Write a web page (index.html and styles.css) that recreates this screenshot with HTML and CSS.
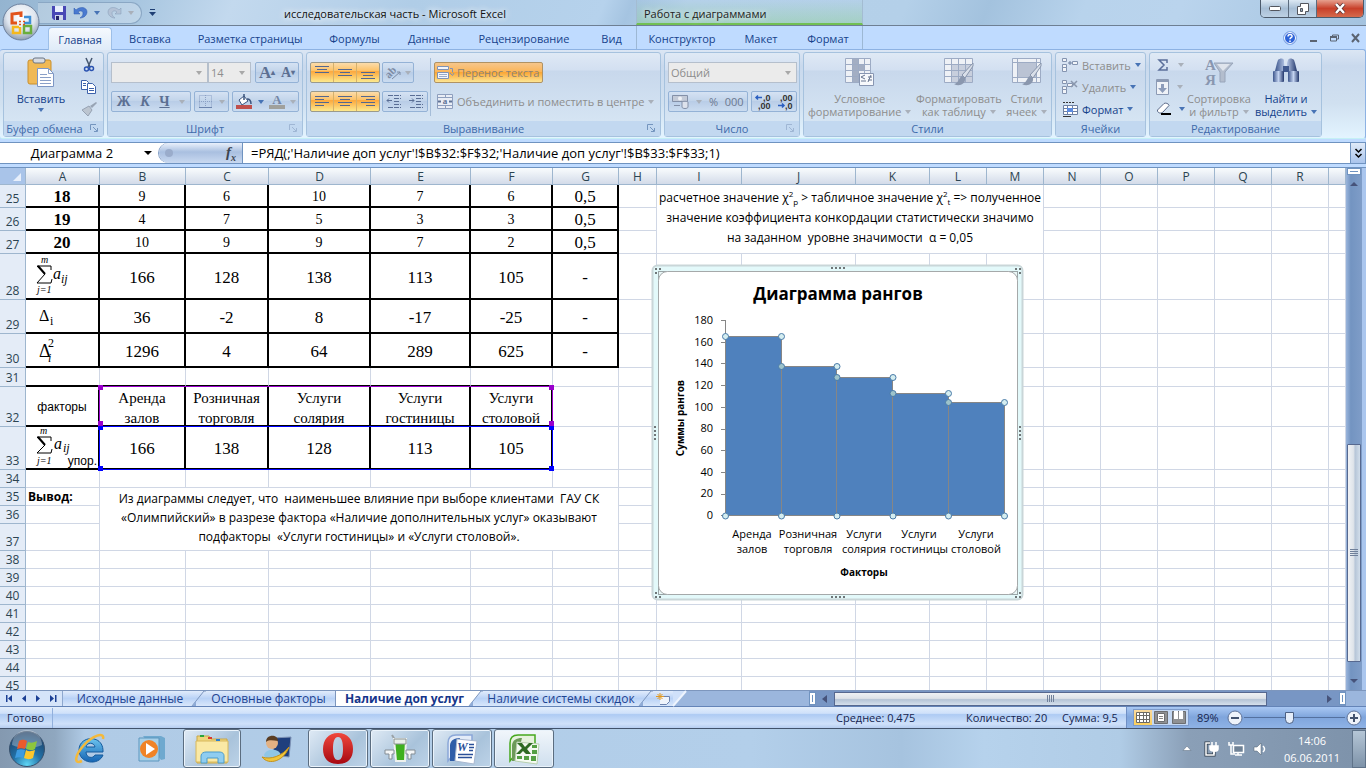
FILE: index.html
```html
<!DOCTYPE html>
<html lang="ru">
<head>
  <meta charset="UTF-8" />
  <meta name="viewport" content="width=device-width, initial-scale=1.0" />
  <title>исследовательская часть - Microsoft Excel</title>
  <link rel="stylesheet" href="styles.css">
</head>
<body>
  <!-- Title bar -->
  <header class="titlebar">
    <div class="quick">
      <button class="qbtn" aria-label="Сохранить"><svg width="14" height="14" viewBox="0 0 14 14"><path d="M0 0h14v14H2L0 12z" fill="#4747b5"/><rect x="3" y="0" width="8" height="6" fill="#e8eefc"/><path d="M3 9h8v5H3z" fill="#cfd6ea"/><path d="M4 10h3v4H4z" fill="#23236a"/></svg></button>
      <button class="qbtn" aria-label="Отменить"><svg width="14" height="14" viewBox="0 0 14 14"><path d="M0 2v6h6L4 6c2-2 5-1 5 1s-1 4-3 5c4 0 7-3 7-6 0-5-7-6-11-2z" fill="#4a7ad0" stroke="#2d58ad" stroke-width=".5"/></svg></button>
      <i class="arr blue"></i>
      <button class="qbtn" aria-label="Вернуть"><svg width="14" height="14" viewBox="0 0 14 14"><path d="M13 2v6H7l2-2C7 4 4 5 4 7s1 4 3 5c-4 0-7-3-7-6 0-5 7-6 11-2z" fill="#b3c2d6" stroke="#8298b5" stroke-width=".5"/></svg></button>
      <i class="arr grey"></i>
    </div>
    <button class="qmore" aria-label="Настройка панели"><svg width="7" height="7" viewBox="0 0 7 7"><path d="M1 .5h5" stroke="#1f3f74"/><path d="M0 3h7L3.500 7z" fill="#1f3f74"/></svg></button>
    <h1 class="doc-title">исследовательская часть - Microsoft Excel</h1>
    <div class="context-title">Работа с диаграммами</div>
    <div class="win-btns">
      <button aria-label="Свернуть"><svg width="12" height="5" viewBox="0 0 12 5"><rect x=".5" y=".5" width="11" height="4" rx="1" fill="#fff" stroke="#53565e"/></svg></button>
      <button aria-label="Восстановить"><svg width="12" height="12" viewBox="0 0 12 12"><path d="M3.500.5h8v8h-3v3h-8v-8h3z" fill="#fff" stroke="#53565e"/><path d="M3.500 5.500h2v3h-2z" fill="#8fa6bd" stroke="#53565e"/></svg></button>
      <button class="close" aria-label="Закрыть"><svg width="12" height="11" viewBox="0 0 12 11"><path d="M2 1l8 9M10 1L2 10" stroke="#5a3030" stroke-width="4"/><path d="M2 1l8 9M10 1L2 10" stroke="#fff" stroke-width="2.500"/></svg></button>
    </div>
  </header>

  <button class="office" aria-label="Office">
    <svg width="38" height="38" viewBox="0 0 38 38">
      <defs><radialGradient id="orb" cx=".5" cy=".35" r=".65"><stop offset="0" stop-color="#fff"/><stop offset=".6" stop-color="#dfe6ef"/><stop offset="1" stop-color="#8e9db2"/></radialGradient></defs>
      <circle cx="19" cy="19" r="18" fill="url(#orb)" stroke="#6d819e"/>
      <g fill="none" stroke-width="2.500">
        <path d="M19 14v-4l-9 1v9h5" stroke="#e2531b" stroke-width="3"/>
        <path d="M22 14h6v6h-6" stroke="#3d8fd6"/>
        <path d="M17 24h-6v6h7v-6" stroke="#f5b81d"/>
        <path d="M22 23h7v7h-7z" stroke="#6aae3c"/>
      </g>
      <path d="M17 18.500h2M21 18.500h2M17 21.500h2M21 21.500h2" stroke="#e2531b" stroke-width="1.500"/>
    </svg>
  </button>

  <!-- Ribbon tabs -->
  <nav class="tabs">
    <button class="tab active">Главная</button>
    <button class="tab t2">Вставка</button>
    <button class="tab t3">Разметка страницы</button>
    <button class="tab t4">Формулы</button>
    <button class="tab t5">Данные</button>
    <button class="tab t6">Рецензирование</button>
    <button class="tab t7">Вид</button>
    <div class="context-tabs">
      <button class="tab t8">Конструктор</button>
      <button class="tab t9">Макет</button>
      <button class="tab t10">Формат</button>
    </div>
    <div class="mdi">
      <svg width="14" height="14" viewBox="0 0 14 14"><circle cx="7" cy="7" r="6.500" fill="#2d63d8" stroke="#8cb0e8"/><circle cx="7" cy="7" r="5.500" fill="none" stroke="#fff"/><path d="M5 5.500c0-3 4.500-2.500 4 0-.3 1.200-2 1.300-2 2.800M7 9.500V11" stroke="#fff" stroke-width="1.500" fill="none"/></svg>
      <svg width="9" height="9" viewBox="0 0 9 9"><path d="M1 8h7" stroke="#5b6472" stroke-width="2"/></svg>
      <svg width="9" height="8" viewBox="0 0 9 8"><path d="M2.500 2V1h6v4H7M.5 3h6v4h-6z" fill="none" stroke="#5b6472"/><path d="M0 3h7" stroke="#5b6472" stroke-width="2"/></svg>
      <svg width="9" height="8" viewBox="0 0 9 8"><path d="M1 0l7 8M8 0L1 8" stroke="#5b6472" stroke-width="2"/></svg>
    </div>
  </nav>

  <!-- Ribbon -->
  <section class="ribbon">
    <div class="group g-clip">
      <div class="body">
        <button class="big">
          <svg width="28" height="30" viewBox="0 0 28 30"><rect x="1" y="3" width="23" height="24" rx="2" fill="#f0b955" stroke="#c98f2c"/><rect x="6" y="1" width="12" height="5" rx="2" fill="#d7dbe2" stroke="#6b7482"/><path d="M10.500 11.500h11l5 5v13h-16z" fill="#fff" stroke="#7d96c4"/><path d="M21.500 11.500v5h5M13 17.500h7M13 20.500h11M13 23.500h11M13 26.500h11" stroke="#8aa0c8" fill="none"/></svg>
          <span>Вставить</span><i class="arr blue"></i>
        </button>
        <div class="stack">
          <svg width="12" height="14" viewBox="0 0 12 14"><path d="M3 0l4 9M9 0L5 9" stroke="#44566f" stroke-width="1.500"/><g fill="none" stroke="#2a52b0" stroke-width="1.500"><circle cx="3.500" cy="11" r="2"/><circle cx="8.500" cy="10.500" r="2"/></g></svg>
          <svg width="15" height="14" viewBox="0 0 15 14"><g fill="#fff" stroke="#3d62ab"><path d="M.5.500h5l2 2v7h-7z"/><path d="M6.500 3.500h5l3 3v7h-8z"/></g><path d="M2 3.500h3M2 5.500h3M8 8.500h5M8 10.500h5" stroke="#3d62ab"/></svg>
          <svg width="16" height="14" viewBox="0 0 16 14"><path d="M15 0l-6 4 2 2 5-5z" fill="#98a4b4"/><path d="M8 4L1 8l6 6 4-6z" fill="#bcc5d0" stroke="#96a2b3"/></svg>
        </div>
      </div>
      <div class="caption">Буфер обмена<svg class="dlg" width="8" height="8" viewBox="0 0 8 8"><path d="M.5 6V.5H6M3 3l4 4M7.500 4v3.500H4" fill="none" stroke="#7495be"/></svg></div>
    </div>

    <div class="group g-font">
      <div class="body rows">
        <div class="row">
          <label class="combo c-font"><input type="text" aria-label="Шрифт"></label><label class="combo c-size"><select aria-label="Размер"><option>14</option></select></label>
          <div class="box b-grow"><button class="serif large">A<sup>▴</sup></button><button class="serif">A<sup>▾</sup></button></div>
        </div>
        <div class="row">
          <div class="box b-biu"><button class="serif">Ж</button><button class="serif it">К</button><button class="serif un">Ч</button><i class="arr grey"></i></div>
          <div class="box b-bord"><svg width="13" height="13" viewBox="0 0 13 13"><path d="M.5.500h12v12H.5zM6.500 0v13M0 6.500h13" fill="none" stroke="#8ba0c4" stroke-dasharray="1 1"/><path d="M0 12.500h13" stroke="#6b83ad"/></svg><i class="arr grey"></i></div>
          <div class="box b-fill"><svg width="17" height="15" viewBox="0 0 17 15"><path d="M3 6l5-4 4 5-6 4z" fill="#fff" stroke="#3c557f"/><path d="M8 6V0M11 5c4 0 4 3 4 5" stroke="#3c557f" fill="none" stroke-width="1.500"/><path d="M0 11h16v4H0z" fill="#c0504d"/></svg><i class="arr blue"></i><svg width="16" height="15" viewBox="0 0 16 15"><text x="8" y="10" text-anchor="middle" class="ico-a">A</text><path d="M0 11h16v4H0z" fill="#a0a09c"/></svg><i class="arr grey"></i></div>
        </div>
      </div>
      <div class="caption">Шрифт<svg class="dlg" width="8" height="8" viewBox="0 0 8 8"><path d="M.5 6V.5H6M3 3l4 4M7.500 4v3.500H4" fill="none" stroke="#9fb6d4"/></svg></div>
    </div>

    <div class="group g-align">
      <div class="body rows">
        <div class="row">
          <div class="box hot b-three">
            <svg width="22" height="19" viewBox="0 0 22 19"><path d="M4 3.500h14M6 6.500h10M4 9.500h14" stroke="#54678f"/></svg>
            <svg width="22" height="19" viewBox="0 0 22 19"><path d="M4 6.500h14M6 9.500h10M4 12.500h14" stroke="#54678f"/></svg>
            <svg width="22" height="19" viewBox="0 0 22 19"><path d="M4 9.500h14M6 12.500h10M4 15.500h14" stroke="#54678f"/></svg>
          </div>
          <div class="box b-orient"><svg width="17" height="15" viewBox="0 0 17 15"><text x="1" y="11" transform="rotate(-45 6 9)" class="ico-ab">ab</text><path d="M7 14l8-7m-3 0h3v3" stroke="#7d8ca6" fill="none"/></svg><i class="arr grey"></i></div>
          <span class="sep"></span>
          <button class="wrap-btn"><svg width="17" height="15" viewBox="0 0 17 15"><path d="M.5 1.500h11v3H.5zM.5 7.500h11v6H.5z" fill="#f4f6fb" stroke="#7f92b6"/><path d="M13 3.500h2.500v4M13 8l2.500 2.500L17 8" stroke="#7f92b6" fill="none"/><path d="M2 9.500h8M2 11.500h8" stroke="#9cabc8"/></svg>Перенос текста</button>
        </div>
        <div class="row">
          <div class="box hot b-three">
            <svg width="22" height="19" viewBox="0 0 22 19"><path d="M4 4.500h14M4 7.500h9M4 10.500h14M4 13.500h9" stroke="#54678f"/></svg>
            <svg width="22" height="19" viewBox="0 0 22 19"><path d="M4 4.500h14M6 7.500h10M4 10.500h14M6 13.500h10" stroke="#54678f"/></svg>
            <svg width="22" height="19" viewBox="0 0 22 19"><path d="M4 4.500h14M9 7.500h9M4 10.500h14M9 13.500h9" stroke="#54678f"/></svg>
          </div>
          <div class="box b-indent">
            <svg width="22" height="19" viewBox="0 0 22 19"><path d="M5 3.500h13M11 6.500h7M11 9.500h5M11 12.500h7M5 15.500h13" stroke="#5a6e95" stroke-dasharray="5 1"/><path d="M9 8.500H4m2-2l-2 2 2 2" stroke="#5a6e95" fill="none"/></svg>
            <svg width="22" height="19" viewBox="0 0 22 19"><path d="M5 3.500h13M11 6.500h7M11 9.500h5M11 12.500h7M5 15.500h13" stroke="#5a6e95" stroke-dasharray="5 1"/><path d="M4 8.500h5m-2-2l2 2-2 2" stroke="#5a6e95" fill="none"/></svg>
          </div>
          <span class="sep"></span>
          <button class="merge-btn"><svg width="16" height="15" viewBox="0 0 16 15"><path d="M.5.500h15v14H.5zM0 3.500h16M0 11.500h16M8.500 0v3M8.500 12v3" fill="#e9edf5" stroke="#8e9fbe"/><path d="M1 7.500h3M12 7.500h3" stroke="#5f7396" stroke-width="2"/><text x="8" y="10" text-anchor="middle" class="ico-s">a</text></svg>Объединить и поместить в центре<i class="arr grey"></i></button>
        </div>
      </div>
      <div class="caption">Выравнивание<svg class="dlg" width="8" height="8" viewBox="0 0 8 8"><path d="M.5 6V.5H6M3 3l4 4M7.500 4v3.500H4" fill="none" stroke="#7495be"/></svg></div>
    </div>

    <div class="group g-num">
      <div class="body rows">
        <div class="row"><label class="combo c-num"><select aria-label="Числовой формат"><option>Общий</option></select></label></div>
        <div class="row">
          <div class="box b-pct"><svg width="17" height="15" viewBox="0 0 17 15"><path d="M.5 1.500h15v6H.5z" fill="#c3cad7" stroke="#8390a8"/><circle cx="8" cy="4.500" r="2" fill="#eef1f6"/><path d="M10 8c0-1 6-1 6 0v5c0 2-6 2-6 0zM2 11.500h6" fill="#dde2ec" stroke="#8390a8"/></svg><i class="arr grey"></i><button>%</button><button>000</button></div>
          <div class="box b-dec"><svg width="21" height="17" viewBox="0 0 21 17"><path d="M9 4.500H3m2-2l-2 2 2 2" stroke="#2b5fc0" fill="none" stroke-width="1.500"/><text x="10" y="8" class="ico-d">,0</text><text x="5" y="16" class="ico-d">,00</text></svg><svg width="21" height="17" viewBox="0 0 21 17"><path d="M3 12.500h6M7 10.500l2 2-2 2" stroke="#2b5fc0" fill="none" stroke-width="1.500"/><text x="5" y="8" class="ico-d">,00</text><text x="10" y="16" class="ico-d">,0</text></svg></div>
        </div>
      </div>
      <div class="caption">Число<svg class="dlg" width="8" height="8" viewBox="0 0 8 8"><path d="M.5 6V.5H6M3 3l4 4M7.500 4v3.500H4" fill="none" stroke="#9fb6d4"/></svg></div>
    </div>

    <div class="group g-style">
      <div class="body">
        <button class="big off">
          <svg width="30" height="30" viewBox="0 0 30 30"><path d="M.5 1.500h25v24H.5z" fill="#eef1f6"/><path d="M7 2h6v24H7zM13 8h7v6h-7z" fill="#a3aec3"/><path d="M.5 1.500h25v24H.5zM0 7.500h26M0 13.500h26M0 19.500h26M7.500 1v25M13.500 1v25M19.500 1v25" fill="none" stroke="#9dabc4"/><path d="M14.500 16.500h14v12h-14z" fill="#f7f9fc" stroke="#8896b2"/><path d="M20 18l-4 2 4 2M16 24h5M23 20h4M23 23h4M26 18l-3 7" stroke="#66748f" fill="none"/></svg>
          <span>Условное</span><span>форматирование<i class="arr grey"></i></span>
        </button>
        <button class="big off">
          <svg width="30" height="30" viewBox="0 0 30 30"><path d="M.5 1.500h28v24H.5z" fill="#eef1f6"/><path d="M8 8h20v17H8z" fill="#c8cfdd"/><path d="M.5 1.500h28v24H.5zM0 7.500h29M0 13.500h29M0 19.500h29M7.500 1v25M14.500 1v25M21.500 1v25" fill="none" stroke="#9dabc4"/><path d="M29 6L18 18l3 3 8-12z" fill="#d9dfe9" stroke="#8794ab"/><path d="M18 19c-3 1-3 7-8 8 5 3 12 0 11-6z" fill="#8a97ae"/></svg>
          <span>Форматировать</span><span>как таблицу<i class="arr grey"></i></span>
        </button>
        <button class="big off">
          <svg width="30" height="30" viewBox="0 0 30 30"><path d="M.5 1.500h28v24H.5z" fill="#eef1f6"/><path d="M5 6h19v14H5z" fill="#bac3d4"/><path d="M.5 1.500h28v24H.5zM0 5.500h29M0 20.500h29M5.500 1v25M24.500 1v25" fill="none" stroke="#9dabc4"/><path d="M29 6L18 18l3 3 8-12z" fill="#d9dfe9" stroke="#8794ab"/><path d="M18 19c-3 1-3 7-8 8 5 3 12 0 11-6z" fill="#8a97ae"/></svg>
          <span>Стили</span><span>ячеек<i class="arr grey"></i></span>
        </button>
      </div>
      <div class="caption">Стили</div>
    </div>

    <div class="group g-cells">
      <div class="body list">
        <button class="off"><svg width="16" height="14" viewBox="0 0 16 14"><path d="M.5.500h4v3h-4zM.5 6.500h4v3h-4zM.5 9.500h4v4h-4zM10.500 3.500h5v3h-5z" fill="#f2f4f8" stroke="#8494b0"/><path d="M6 5h4M8 3v4" stroke="#6c7f9f"/></svg>Вставить<i class="arr blue"></i></button>
        <button class="off"><svg width="16" height="14" viewBox="0 0 16 14"><path d="M.5.500h4v3h-4zM.5 6.500h4v3h-4zM.5 9.500h4v4h-4zM5.500 3.500h5v3h-5z" fill="#f2f4f8" stroke="#8494b0"/><path d="M9 1l6 6M15 1L9 7" stroke="#8a97ad" stroke-width="1.500"/></svg>Удалить<i class="arr blue"></i></button>
        <button><svg width="16" height="16" viewBox="0 0 16 16"><path d="M1 1.500h12" stroke="#333" stroke-dasharray="2 1"/><path d="M1.500 4.500h14v9h-14zM1 7.500h15M1 10.500h15M5.500 4v10M10.500 4v10" fill="#fff" stroke="#6d81a4"/><path d="M5 7h6v4H5z" fill="#5c8be0"/><path d="M1 15.500h8" stroke="#333"/></svg>Формат<i class="arr blue"></i></button>
      </div>
      <div class="caption">Ячейки</div>
    </div>

    <div class="group g-edit">
      <div class="body">
        <div class="list">
          <button><svg width="14" height="14" viewBox="0 0 14 14"><path d="M11 5V2H3l5 5-5 5h8V9" fill="none" stroke="#5b6f9b" stroke-width="1.500"/></svg><i class="arr grey"></i></button>
          <button><svg width="13" height="16" viewBox="0 0 13 16"><path d="M.5.500h12v15H.5z" fill="#eff2f7" stroke="#8c9ab4"/><path d="M0 2h13" stroke="#8c9ab4" stroke-width="2"/><path d="M5 5h3v4h3l-4.500 5L2 9h3z" fill="#8d9cba"/></svg><i class="arr grey"></i></button>
          <button><svg width="15" height="14" viewBox="0 0 15 14"><path d="M1.500 8L8 1.500c1-1 5 0 5 2L7 10c-2 2-6 1-5.500-2z" fill="#fff" stroke="#5a6988"/><path d="M5 12h10" stroke="#000" stroke-width="2"/></svg><i class="arr blue"></i></button>
        </div>
        <button class="big off">
          <svg width="30" height="30" viewBox="0 0 30 30"><text x="1" y="13" class="ico-sort">А</text><text x="1" y="28" class="ico-sort">Я</text><path d="M10 6h19l-8 9v10h-5V15z" fill="#b3bdcd" stroke="#98a5ba"/><path d="M13 7h13l-7 7z" fill="#dfe4ec"/></svg>
          <span>Сортировка</span><span>и фильтр<i class="arr grey"></i></span>
        </button>
        <button class="big find">
          <svg width="28" height="30" viewBox="0 0 28 30"><defs><linearGradient id="bino"><stop offset="0" stop-color="#3c558c"/><stop offset=".5" stop-color="#c3d3f0"/><stop offset="1" stop-color="#22376c"/></linearGradient></defs><path d="M6 3c2-2 5-2 6 0v3l1 8H3l2-8zM16 3c1-2 4-2 6 0l1 3 2 8H15V6z" fill="url(#bino)"/><rect x="11" y="9" width="6" height="6" fill="#40598f"/><rect x="1" y="14" width="11" height="11" rx="1" fill="url(#bino)"/><rect x="16" y="14" width="11" height="11" rx="1" fill="url(#bino)"/></svg>
          <span>Найти и</span><span>выделить<i class="arr blue"></i></span>
        </button>
      </div>
      <div class="caption">Редактирование</div>
    </div>
  </section>

  <!-- Formula bar -->
  <section class="fbar">
    <input class="name-box" type="text" value="Диаграмма 2" aria-label="Имя"><i class="arr black"></i>
    <div class="fx"><span class="knob"></span><span class="fx-label">f<sub>x</sub></span></div>
    <input class="formula" type="text" value="=РЯД(;'Наличие доп услуг'!$B$32:$F$32;'Наличие доп услуг'!$B$33:$F$33;1)" aria-label="Строка формул">
    <button class="expand" aria-label="Развернуть"><svg width="7" height="9" viewBox="0 0 7 9"><path d="M.5 0l3 3 3-3M.5 5l3 3 3-3" fill="none" stroke="#000" stroke-width="1.500"/></svg></button>
  </section>

  <!-- Worksheet -->
  <main class="work">
    <div class="sheet">
      <table class="grid">
        <colgroup><col class="w26"><col class="w74"><col class="w86"><col class="w83"><col class="w102"><col class="w100"><col class="w82"><col class="w66"><col class="w38"><col class="w85"><col class="w114"><col class="w74"><col class="w57"><col class="w57"><col class="w57"><col class="w57"><col class="w57"><col class="w57"><col class="w57"><col></colgroup>
        <thead>
          <tr><th class="corner"><svg width="8" height="8" viewBox="0 0 8 8"><path d="M8 0v8H0z" fill="#e7effb"/></svg></th><th>A</th><th>B</th><th>C</th><th>D</th><th>E</th><th>F</th><th>G</th><th>H</th><th>I</th><th>J</th><th>K</th><th>L</th><th>M</th><th>N</th><th>O</th><th>P</th><th>Q</th><th>R</th><th></th></tr>
        </thead>
        <tbody>
          <tr class="h23"><th>25</th><td class="b n">18</td><td class="b s">9</td><td class="b s">6</td><td class="b s">10</td><td class="b s">7</td><td class="b s">6</td><td class="b">0,5</td><td></td><td class="note n1" colspan="5" rowspan="3">расчетное значение χ<sup>2</sup><sub>р</sub> &gt; табличное значение χ<sup>2</sup><sub>t</sub> =&gt; полученное<br>значение коэффициента конкордации статистически значимо<br>на заданном&nbsp; уровне значимости&nbsp; α = 0,05</td><td></td><td></td><td></td><td></td><td></td><td></td></tr>
          <tr class="h23"><th>26</th><td class="b n">19</td><td class="b s">4</td><td class="b s">7</td><td class="b s">5</td><td class="b s">3</td><td class="b s">3</td><td class="b">0,5</td><td></td><td></td><td></td><td></td><td></td><td></td><td></td></tr>
          <tr class="h23"><th>27</th><td class="b n">20</td><td class="b s">10</td><td class="b s">9</td><td class="b s">9</td><td class="b s">7</td><td class="b s">2</td><td class="b">0,5</td><td></td><td></td><td></td><td></td><td></td><td></td><td></td></tr>
          <tr class="h46"><th>28</th><td class="b eq"><svg width="72" height="42" viewBox="0 0 72 42"><path d="M25 15v-4H11l8 8-8 9h14l1-4" fill="none" stroke="#000"/><path d="M12 11l7 8" stroke="#000" stroke-width="2"/><text x="15" y="8" class="m10">m</text><text x="11" y="38" class="m10">j=1</text><text x="27" y="24" class="m16">a</text><text x="35" y="28" class="m12">ij</text></svg></td><td class="b">166</td><td class="b">128</td><td class="b">138</td><td class="b">113</td><td class="b">105</td><td class="b">-</td><td></td><td></td><td></td><td></td><td></td><td></td><td></td><td></td><td></td><td></td><td></td><td></td></tr>
          <tr class="h34"><th>29</th><td class="b eq"><svg width="72" height="30" viewBox="0 0 72 30"><text x="13" y="20" class="r16">Δ</text><text x="24" y="24" class="r12">i</text></svg></td><td class="b">36</td><td class="b">-2</td><td class="b">8</td><td class="b">-17</td><td class="b">-25</td><td class="b">-</td><td></td><td></td><td></td><td></td><td></td><td></td><td></td><td></td><td></td><td></td><td></td><td></td></tr>
          <tr class="h34"><th>30</th><td class="b eq"><svg width="72" height="30" viewBox="0 0 72 30"><text x="13" y="22" class="r18">Δ</text><text x="22" y="12" class="r12">2</text><text x="22" y="27" class="m12">i</text></svg></td><td class="b">1296</td><td class="b">4</td><td class="b">64</td><td class="b">289</td><td class="b">625</td><td class="b">-</td><td></td><td></td><td></td><td></td><td></td><td></td><td></td><td></td><td></td><td></td><td></td><td></td></tr>
          <tr class="h19"><th>31</th><td class="bb"></td><td class="bb"></td><td class="bb"></td><td class="bb"></td><td class="bb"></td><td class="bb"></td><td></td><td></td><td></td><td></td><td></td><td></td><td></td><td></td><td></td><td></td><td></td><td></td><td></td></tr>
          <tr class="h40"><th>32</th><td class="b fact">факторы</td><td class="b w"><div>Аренда<br>залов</div></td><td class="b w"><div>Розничная<br>торговля</div></td><td class="b w"><div>Услуги<br>солярия</div></td><td class="b w"><div>Услуги<br>гостиницы</div></td><td class="b w"><div>Услуги<br>столовой</div></td><td></td><td></td><td></td><td></td><td></td><td></td><td></td><td></td><td></td><td></td><td></td><td></td><td></td></tr>
          <tr class="h43"><th>33</th><td class="b eq"><svg width="72" height="40" viewBox="0 0 72 40"><path d="M25 13V9H11l8 8-8 8h14l1-4" fill="none" stroke="#000"/><path d="M12 9l7 8" stroke="#000" stroke-width="2"/><text x="14" y="6" class="m10">m</text><text x="11" y="36" class="m10">j=1</text><text x="28" y="21" class="m16">a</text><text x="37" y="24" class="m12">ij</text><text x="71" y="37" text-anchor="end" class="upor">упор.</text></svg></td><td class="b">166</td><td class="b">138</td><td class="b">128</td><td class="b">113</td><td class="b">105</td><td></td><td></td><td></td><td></td><td></td><td></td><td></td><td></td><td></td><td></td><td></td><td></td><td></td></tr>
          <tr><th>34</th><td></td><td></td><td></td><td></td><td></td><td></td><td></td><td></td><td></td><td></td><td></td><td></td><td></td><td></td><td></td><td></td><td></td><td></td><td></td></tr>
          <tr><th>35</th><td class="out">Вывод:</td><td class="note n2" colspan="6" rowspan="3">Из диаграммы следует, что&nbsp; наименьшее влияние при выборе клиентами&nbsp; ГАУ СК<br>«Олимпийский» в разрезе фактора «Наличие дополнительных услуг» оказывают<br>подфакторы&nbsp; «Услуги гостиницы» и «Услуги столовой».</td><td></td><td></td><td></td><td></td><td></td><td></td><td></td><td></td><td></td><td></td><td></td><td></td></tr>
          <tr><th>36</th><td></td><td></td><td></td><td></td><td></td><td></td><td></td><td></td><td></td><td></td><td></td><td></td><td></td></tr>
          <tr class="h27"><th>37</th><td></td><td></td><td></td><td></td><td></td><td></td><td></td><td></td><td></td><td></td><td></td><td></td><td></td></tr>
          <tr><th>38</th><td></td><td></td><td></td><td></td><td></td><td></td><td></td><td></td><td></td><td></td><td></td><td></td><td></td><td></td><td></td><td></td><td></td><td></td><td></td></tr>
          <tr><th>39</th><td></td><td></td><td></td><td></td><td></td><td></td><td></td><td></td><td></td><td></td><td></td><td></td><td></td><td></td><td></td><td></td><td></td><td></td><td></td></tr>
          <tr><th>40</th><td></td><td></td><td></td><td></td><td></td><td></td><td></td><td></td><td></td><td></td><td></td><td></td><td></td><td></td><td></td><td></td><td></td><td></td><td></td></tr>
          <tr><th>41</th><td></td><td></td><td></td><td></td><td></td><td></td><td></td><td></td><td></td><td></td><td></td><td></td><td></td><td></td><td></td><td></td><td></td><td></td><td></td></tr>
          <tr><th>42</th><td></td><td></td><td></td><td></td><td></td><td></td><td></td><td></td><td></td><td></td><td></td><td></td><td></td><td></td><td></td><td></td><td></td><td></td><td></td></tr>
          <tr><th>43</th><td></td><td></td><td></td><td></td><td></td><td></td><td></td><td></td><td></td><td></td><td></td><td></td><td></td><td></td><td></td><td></td><td></td><td></td><td></td></tr>
          <tr><th>44</th><td></td><td></td><td></td><td></td><td></td><td></td><td></td><td></td><td></td><td></td><td></td><td></td><td></td><td></td><td></td><td></td><td></td><td></td><td></td></tr>
          <tr><th>45</th><td></td><td></td><td></td><td></td><td></td><td></td><td></td><td></td><td></td><td></td><td></td><td></td><td></td><td></td><td></td><td></td><td></td><td></td><td></td></tr>
        </tbody>
      </table>

      <!-- source ranges of the chart -->
      <svg class="ranges" width="458" height="88" viewBox="0 0 458 88">
        <path d="M2.500 41V1.500h453V41" fill="none" stroke="#90c"/>
        <path d="M2.500 41.500h453v43h-453z" fill="none" stroke="#00f"/>
        <path d="M1 0h5v5H1zM452 0h5v5h-5zM1 36h5v5H1zM452 36h5v5h-5z" fill="#90c"/>
        <path d="M1 41h5v4H1zM452 41h5v4h-5zM1 81h5v5H1zM452 81h5v5h-5z" fill="#00f"/>
      </svg>

      <svg class="chart" width="374" height="338" viewBox="0 0 374 338">
        <rect x="1.500" y="1.500" width="370" height="334" rx="5" fill="#e3f9fa" stroke="#c9d6d8" stroke-width="2"/>
        <rect x="7.500" y="7.500" width="359" height="323" fill="#eaf7f7" stroke="#9aa5a7"/>
        <rect x="7.500" y="7.500" width="359" height="323" rx="9" fill="#fff" stroke="#a5a9aa"/>
        <g fill="#6f7678">
          <path d="M4 4h2v2H4zM8 4h2v2H8zM4 8h2v2H4zM364 4h2v2h-2zM368 4h2v2h-2zM368 8h2v2h-2zM4 328h2v2H4zM4 332h2v2H4zM8 332h2v2H8zM368 328h2v2h-2zM364 332h2v2h-2zM368 332h2v2h-2z"/>
          <path d="M180 3h2v2h-2zM184 3h2v2h-2zM188 3h2v2h-2zM192 3h2v2h-2zM180 332h2v2h-2zM184 332h2v2h-2zM188 332h2v2h-2zM192 332h2v2h-2z"/>
          <path d="M3 162h2v2H3zM3 166h2v2H3zM3 170h2v2H3zM3 174h2v2H3zM368 162h2v2h-2zM368 166h2v2h-2zM368 170h2v2h-2zM368 174h2v2h-2z"/>
        </g>
        <text x="187" y="36" text-anchor="middle" class="ch-title">Диаграмма рангов</text>
        <g class="ch-tick" text-anchor="end">
          <text x="62" y="60">180</text><text x="62" y="82">160</text><text x="62" y="103">140</text><text x="62" y="125">120</text><text x="62" y="147">100</text><text x="62" y="168">80</text><text x="62" y="190">60</text><text x="62" y="212">40</text><text x="62" y="233">20</text><text x="62" y="255">0</text>
        </g>
        <path d="M74.500 56v196M70 56.500h5M70 78.500h5M70 99.500h5M70 121.500h5M70 143.500h5M70 165.500h5M70 186.500h5M70 208.500h5M70 230.500h5M70 251.500h5" stroke="#868686" fill="none"/>
        <g fill="#4f81bd" stroke="#868686">
          <path d="M74.500 72.500h56v179h-56z"/><path d="M130.500 102.500h55v149h-55z"/><path d="M185.500 113.500h56v138h-56z"/><path d="M241.500 129.500h56v122h-56z"/><path d="M297.500 138.500h56v113h-56z"/>
        </g>
        <path d="M130.500 102v149" stroke="#868686"/>
        <g fill="#d4edf0" stroke="#4a7ba8">
          <circle cx="74.500" cy="72.500" r="3"/><circle cx="130.500" cy="72.500" r="3"/><circle cx="186" cy="102.500" r="3"/><circle cx="242" cy="113.500" r="3"/><circle cx="297.500" cy="129.500" r="3"/><circle cx="353.500" cy="138.500" r="3"/>
          <circle cx="74.500" cy="252" r="3"/><circle cx="130.500" cy="252" r="3"/><circle cx="186" cy="252" r="3"/><circle cx="242" cy="252" r="3"/><circle cx="297.500" cy="252" r="3"/><circle cx="353.500" cy="252" r="3"/>
        </g>
        <g fill="#9dc3cb" stroke="#4a7ba8">
          <circle cx="130.500" cy="102.500" r="3"/><circle cx="186" cy="113.500" r="3"/><circle cx="242" cy="129.500" r="3"/><circle cx="297.500" cy="138.500" r="3"/>
        </g>
        <g class="ch-cat" text-anchor="middle">
          <text x="101" y="274">Аренда</text><text x="101" y="289">залов</text>
          <text x="157" y="274">Розничная</text><text x="157" y="289">торговля</text>
          <text x="213" y="274">Услуги</text><text x="213" y="289">солярия</text>
          <text x="268" y="274">Услуги</text><text x="268" y="289">гостиницы</text>
          <text x="325" y="274">Услуги</text><text x="325" y="289">столовой</text>
        </g>
        <text x="213" y="312" text-anchor="middle" class="ch-axis">Факторы</text>
        <text transform="translate(33 154) rotate(-90)" text-anchor="middle" class="ch-axis">Суммы рангов</text>
      </svg>
    </div>
    <div class="vscroll">
      <span class="vsplit"></span>
      <i class="tri up"></i>
      <span class="vthumb"><i></i></span>
      <i class="tri down"></i>
    </div>
  </main>

  <!-- Sheet tabs and horizontal scroll -->
  <section class="sheets">
    <div class="sheet-nav"><svg width="56" height="9" viewBox="0 0 56 9"><path d="M1 1h1.500v7H1zM7 1v7L3 4.500zM21 1v7l-4-3.500zM31 1v7l4-3.500zM45 1v7l4-3.500zM50 1h1.500v7H50z" fill="#1b3f94"/></svg></div>
    <button class="stab s1">Исходные данные</button><svg class="slant" width="14" height="15" viewBox="0 0 14 15"><path d="M0 15L12 0h2" fill="none" stroke="#7d96bd"/><path d="M4 15h-4l4-5z" fill="#8fabd6"/></svg>
    <button class="stab s2">Основные факторы</button>
    <button class="stab s3">Наличие доп услуг</button><svg class="slant" width="14" height="15" viewBox="0 0 14 15"><path d="M0 0h12L0 15z" fill="#fff"/><path d="M0 15L12 0h2" fill="none" stroke="#7d96bd"/><path d="M4 15h-4l4-5z" fill="#8fabd6"/></svg>
    <button class="stab s4">Наличие системы скидок</button><svg class="slant" width="14" height="15" viewBox="0 0 14 15"><path d="M0 15L12 0h2" fill="none" stroke="#7d96bd"/><path d="M4 15h-4l4-5z" fill="#8fabd6"/></svg>
    <button class="stab s5" aria-label="Вставить лист"><svg width="15" height="12" viewBox="0 0 15 12"><path d="M4 3.500h9.500v5l-3 3H4" fill="#eef3fb" stroke="#6d83ae"/><path d="M4 0v7M0 3.500h8M1.500 1l5 5M6.500 1l-5 5" stroke="#e39a21"/></svg></button><svg width="14" height="15" viewBox="0 0 14 15"><path d="M0 0h13L0 15z" fill="#d0e1fa"/><path d="M0 15L13 0" stroke="#eef4fd" stroke-width="2"/></svg>
    <div class="hscroll">
      <span class="hsplit"></span>
      <i class="tri left"></i>
      <span class="hthumb"><i></i></span>
      <i class="tri right"></i>
      <span class="hsplit"></span>
    </div>
  </section>

  <!-- Status bar -->
  <footer class="status">
    <span class="ready">Готово</span>
    <span class="stat">Среднее: 0,475</span>
    <span class="stat st2">Количество: 20</span>
    <span class="stat st3">Сумма: 9,5</span>
    <div class="zoom">
      <div class="views">
        <button class="on" aria-label="Обычный"><svg width="14" height="11" viewBox="0 0 14 11"><path d="M.5.500h13v10H.5zM0 3.500h14M0 7.500h14M3.500 0v11M7.500 0v11M10.500 0v11" fill="#fff" stroke="#6b6a66"/></svg></button>
        <button aria-label="Разметка"><svg width="14" height="13" viewBox="0 0 14 13"><path d="M.5.500h13v12H.5z" fill="#8f9194" stroke="#6c6e71"/><path d="M3.500 2.500h7v8h-7z" fill="#fff" stroke="#6c6e71"/><path d="M5 5.500h4M5 7.500h4" stroke="#888"/></svg></button>
        <button aria-label="Страничный"><svg width="14" height="13" viewBox="0 0 14 13"><path d="M.5.500h13v12H.5z" fill="#8f9194" stroke="#6c6e71"/><path d="M2 0h4v8H2zM7 0h4v8H7z" fill="#fff"/></svg></button>
      </div>
      <span class="pct">89%</span>
      <button class="zb" aria-label="Уменьшить"><svg width="16" height="16" viewBox="0 0 16 16"><circle cx="8" cy="8" r="7" fill="#eef3fa" stroke="#5d7299"/><path d="M4 8h8" stroke="#43536f" stroke-width="2"/></svg></button>
      <input type="range" min="10" max="190" value="91" aria-label="Масштаб">
      <button class="zb" aria-label="Увеличить"><svg width="16" height="16" viewBox="0 0 16 16"><circle cx="8" cy="8" r="7" fill="#eef3fa" stroke="#5d7299"/><path d="M4 8h8M8 4v8" stroke="#43536f" stroke-width="2"/></svg></button>
    </div>
  </footer>

  <!-- Taskbar -->
  <div class="taskbar">
    <button class="task start" aria-label="Пуск"><svg width="38" height="38" viewBox="0 0 38 38"><defs><radialGradient id="st" cx=".5" cy=".95" r=".9"><stop offset="0" stop-color="#5fd6f5"/><stop offset=".45" stop-color="#2272a8"/><stop offset="1" stop-color="#1c3f66"/></radialGradient></defs><circle cx="19" cy="19" r="17.500" fill="url(#st)" stroke="#37506c"/><path d="M4 15a15 15 0 0130 0c-8 4-22 4-30 0z" fill="#fff" opacity=".3"/><path d="M11 11c3-2 6-1 8 0l-2 8c-3-1-5-1-8 0z" fill="#ea5b2c"/><path d="M20 12c3 1 5 1 9-1l-2 8c-3 2-6 1-9 0z" fill="#8cc63e"/><path d="M9 20c3-1 5-1 8 0l-2 8c-2-1-5-1-8 0z" fill="#3d9be0"/><path d="M18 20c3 2 6 1 9 0l-2 8c-4 2-6 1-9 0z" fill="#fcc72c"/></svg></button>
    <button class="task" aria-label="Internet Explorer"><svg width="34" height="34" viewBox="0 0 34 34"><defs><linearGradient id="ie" x2="0" y2="1"><stop offset="0" stop-color="#6cc4ee"/><stop offset="1" stop-color="#1464b4"/></linearGradient></defs><path d="M30 20H13c0 6 7 7 9 3h8c-4 11-24 9-24-5C6 3 31 2 30 20zm-8-5c-1-5-8-5-9 0z" fill="url(#ie)" stroke="#145a9c"/><path d="M30 7c2-8-11-3-19 6C2 23 0 33 9 29" fill="none" stroke="#f4b93b" stroke-width="2.500"/></svg></button>
    <button class="task" aria-label="Media Player"><svg width="30" height="30" viewBox="0 0 30 30"><path d="M6 2h18l4 2v21l-4 1z" fill="#6fa9cf"/><path d="M2 4h20v23H2z" fill="#a8d0e8" stroke="#5d97bf"/><circle cx="12" cy="15" r="9" fill="#f08326"/><path d="M9 9l9 6-9 6z" fill="#fff"/></svg></button>
    <button class="task framed fold" aria-label="Проводник"><svg width="34" height="32" viewBox="0 0 34 32"><path d="M2 3h12l2 3h16v24H2z" fill="#efd57c" stroke="#c9a748"/><path d="M1 8h32v21H1z" fill="#fae9a5" stroke="#d7b85c"/><path d="M5 2h4v2H5z" fill="#2ca53b"/><path d="M13 4h4v2h-4z" fill="#d83a2d"/><path d="M21 6h4v2h-4z" fill="#2a80d0"/><path d="M6 30v-7c0-3 3-4 5-4h13c4 0 5 2 5 4v7h-6v-5H12v5z" fill="#8fcdf0" stroke="#4a9bcb"/></svg></button>
    <button class="task" aria-label="Пользователь"><svg width="34" height="32" viewBox="0 0 34 32"><path d="M12 5l19-1-2 20-15-2z" fill="#1f3f7d" stroke="#7d92b5"/><circle cx="12" cy="10" r="6" fill="#e3b183"/><path d="M6 9c0-8 12-8 12-1-4 0-8-2-12 1z" fill="#5a3d22"/><path d="M4 22c2-7 15-7 17 0l-3 5H6z" fill="#8fc6e6"/><path d="M2 24c9 3 20-1 27-10-5 14-20 19-27 10z" fill="#f0c53b" stroke="#c4921b"/></svg></button>
    <button class="task framed opera" aria-label="Opera"><svg width="32" height="34" viewBox="0 0 32 34"><defs><linearGradient id="op" x2="0" y2="1"><stop offset="0" stop-color="#f0483d"/><stop offset="1" stop-color="#a60710"/></linearGradient></defs><path d="M16 1C6 1 1 8 1 17s5 15 15 15 15-6 15-15S26 1 16 1zm0 4c4 0 5 6 5 12s-1 11-5 11-5-5-5-11 1-12 5-12z" fill="url(#op)" fill-rule="evenodd"/></svg></button>
    <button class="task framed" aria-label="QIP"><svg width="32" height="32" viewBox="0 0 32 32"><path d="M8 2l3 5" stroke="#9aa2a6" stroke-width="2"/><path d="M10 6h12l-1 22h-9z" fill="#3fb01f" stroke="#eef1ee" stroke-width="2"/><path d="M10 6h12v5H10z" fill="#e9efe9" stroke="#8a9294"/><path d="M1 17h9v4H8v5H5v-5H1zM31 17h-9v4h2v5h3v-5h4z" fill="#f4f6f7" stroke="#848d94"/></svg></button>
    <button class="task framed" aria-label="Word"><svg width="32" height="32" viewBox="0 0 32 32"><path d="M2 28V10c0-6 3-8 8-8h16v14H12z" fill="#e4ecf8" stroke="#8aa7d8" stroke-width="1.500"/><path d="M4 28V12c1-5 4-7 10-7L9 28z" fill="#2f5da8"/><path d="M11 6l20 2-3 23-19-3z" fill="#fff" stroke="#a8b7cf"/><text x="11" y="18" class="ico-w">W</text><path d="M23 11.500h5M23 14.500h5M23 17.500h4M12 21.500h15M12 24.500h14" stroke="#2a4f98" stroke-width="1.500"/></svg></button>
    <button class="task framed current" aria-label="Excel"><svg width="32" height="32" viewBox="0 0 32 32"><path d="M2 28V10c0-6 3-8 8-8h17v14H12z" fill="#e6f2dd" stroke="#46a81e" stroke-width="1.500"/><path d="M4 28V12c1-5 4-7 10-7L8 28z" fill="#6d9a58"/><path d="M9 9l22 2-2 20-22-3z" fill="#f5faf2" stroke="#b7cfae"/><path d="M9 10h5l3 4 4-4h4l-6 6 4 5h-5l-3-3-3 3H8l6-6z" fill="#2f6b22"/><path d="M24 12h5v3h-5zM24 17h5v4h-5zM23 23h5v5h-5zM16 23h5v4h-5zM9 23h5v3H9z" fill="#55a043"/></svg></button>
    <div class="tray">
      <svg class="more" width="10" height="5" viewBox="0 0 10 5"><path d="M5 0l4 4.500H1z" fill="#fff" stroke="#55677a" stroke-width=".5"/></svg>
      <svg width="15" height="16" viewBox="0 0 15 16"><path d="M6 2H2v12h8v-4" fill="none" stroke="#2e3a47" stroke-width="3"/><path d="M6 2H2v12h8v-4" fill="none" stroke="#fff" stroke-width="1.500"/><path d="M8 1v4M12 1v4M6 5h8v3c0 3-7 3-8 0zM10 10v3" fill="#fff" stroke="#fff" stroke-width="1.500"/></svg>
      <svg width="16" height="16" viewBox="0 0 16 16"><path d="M5.500 4.500h10v7h-10zM7 14h7M10 12v2" fill="#6f8296" stroke="#fff" stroke-width="1.500"/><path d="M1 1v3h4V1M3 4v9h4" fill="none" stroke="#fff" stroke-width="1.500"/></svg>
      <svg width="14" height="14" viewBox="0 0 14 14"><path d="M1 5h3l4-4v12L4 9H1z" fill="#fff" stroke="#4d5c6c" stroke-width=".5"/><path d="M10 4c2 2 2 4 0 6" fill="none" stroke="#fff" stroke-width="1.500"/></svg>
      <div class="clock">14:06<br>06.06.2011</div>
      <button class="desk" aria-label="Свернуть все окна"></button>
    </div>
  </div>
</body>
</html>
```
FILE: styles.css
```css
* { box-sizing: border-box; }
body { margin: 0; height: 100vh; display: flex; flex-direction: column; overflow: hidden; background: #bfdbff; font-family: "Open Sans", "Noto Sans", sans-serif; font-size: 11px; color: #15428b; }
button { font: inherit; color: inherit; background: none; border: 0; padding: 0; margin: 0; display: flex; align-items: center; justify-content: center; white-space: nowrap; }
input, select { font: inherit; color: inherit; border: 0; padding: 0; margin: 0; background: none; outline: none; min-width: 0; border-radius: 0; appearance: none; }
svg { display: block; flex: none; overflow: visible; }

.arr { display: block; flex: none; width: 0; height: 0; border: 3px solid transparent; border-top: 4px solid; border-bottom: 0; }
.arr.blue { border-top-color: #4773b5; }
.arr.grey { border-top-color: #a9b0ba; }
.arr.black { border-width: 4px 4px 0; border-top-color: #000; }

/* title bar */
.titlebar { flex: none; height: 26px; display: flex; align-items: flex-start; border-bottom: 1px solid #6e7f93; background: linear-gradient(112deg, #94b4d0 0, #a8c6e0 10%, #c3d9ee 17%, #b0cde7 30%, #b6d2ec 44%, #a5c4e1 46%, #b5d1ea 50%, #b4d0e9 66%, #a3c2de 72%, #b8d3ec 79%, #bad4ed 86%, #a4c3df 100%); }
.quick { margin: 2px 0 0 38px; width: 104px; height: 22px; padding: 0 0 0 14px; display: flex; align-items: center; gap: 8px; border: 1px solid #8aa7c4; border-left: 0; border-radius: 0 12px 12px 0; background: #ffffff40; }
.qbtn + .arr { margin-left: -2px; }
.qmore { margin: 9px 0 0 7px; }
.doc-title { margin: 5px 0 0 128px; font-size: 11px; line-height: 17px; font-weight: 400; color: #111; white-space: nowrap; text-shadow: 0 0 6px #fff, 0 0 8px #fff; width: 352px; }
.context-title { width: 227px; height: 25px; padding: 5px 0 0 7px; line-height: 17px; color: #222; border-bottom: 2px solid #71c052; border-left: 1px solid #a3bcd2; border-right: 1px solid #a3bcd2; background: linear-gradient(#ffffff00, #8ccf8c66); text-shadow: 0 0 6px #fff; }
.win-btns { margin-left: auto; margin-right: 2px; display: flex; height: 18px; border: 1px solid #4c5a6b; border-top: 0; border-radius: 0 0 5px 5px; overflow: hidden; }
.win-btns button { width: 28px; background: linear-gradient(#dce8f3, #a7bed5 50%, #bdd1e4); border-right: 1px solid #5b6b7e; }
.win-btns .close { width: 46px; border: 0; background: linear-gradient(#e6a08e, #c8402a 50%, #d56a4c); }
.office { position: absolute; left: 2px; top: 3px; }

/* ribbon tabs */
.tabs { flex: none; height: 23px; display: flex; padding-left: 48px; background: #bfdbff; }
.tab { height: 23px; margin-top: 1px; }
.tab.active { width: 64px; border: 1px solid #9dbfe8; border-bottom: 0; border-radius: 4px 4px 0 0; background: linear-gradient(#f5f9fe, #dfebf8); position: relative; z-index: 1; }
.t2 { width: 76px; } .t3 { width: 124px; } .t4 { width: 85px; } .t5 { width: 64px; } .t6 { width: 126px; } .t7 { width: 49px; }
.context-tabs { display: flex; border-left: 1px solid #9db8d4; border-right: 1px solid #9db8d4; width: 227px; }
.t8 { width: 90px; } .t9 { width: 68px; } .t10 { width: 66px; }
.mdi { margin-left: auto; padding-right: 6px; display: flex; align-items: center; gap: 12px; }

/* ribbon */
.ribbon { flex: none; height: 90px; display: flex; gap: 3px; padding: 2px 3px; border: 1px solid #8db2e3; border-left: 0; border-bottom-color: #c5f0f5; border-radius: 3px; background: linear-gradient(#dbe6f4, #c9d9ed 18%, #d0e0f0 60%, #e3f4ff); }
.group { height: 85px; display: flex; flex-direction: column; border: 1px solid #a6c2de; border-radius: 3px; background: linear-gradient(#dfe9f5, #d3e0f1 20%, #c8d8ec 22%, #d9e8f5); }
.group .body { flex: 1; display: flex; }
.caption { height: 15px; position: relative; text-align: center; line-height: 15px; color: #3e6aaa; background: #c2d8f0; white-space: nowrap; }
.dlg { position: absolute; right: 5px; top: 3px; }
.g-clip { width: 101px; } .g-font { width: 196px; } .g-align { width: 355px; } .g-num { width: 136px; } .g-style { width: 249px; } .g-cells { width: 91px; } .g-edit { width: 173px; }
.g-clip .caption { padding-right: 18px; }
.big { flex-direction: column; justify-content: flex-start; padding-top: 4px; line-height: 13px; }
.big svg { margin-bottom: 5px; }
.big span { display: flex; align-items: center; gap: 4px; }
.big > .arr { margin-top: 3px; }
.off { color: #8d8d8d; }
.g-clip .big { width: 66px; margin-left: 4px; }
.stack { flex: 1; display: flex; flex-direction: column; gap: 8px; padding-top: 5px; align-items: center; }
.rows { flex-direction: column; gap: 8px; padding: 9px 0 0 3px; }
.row { display: flex; height: 21px; }
.sep { width: 1px; height: 29px; margin: -4px 3px 0 auto; background: #a5bdd8; }
.combo { position: relative; display: flex; height: 21px; border: 1px solid #b5bfcc; background: #ebebeb; color: #8d8d8d; }
.combo::after { content: ""; position: absolute; right: 5px; top: 8px; border: 3px solid transparent; border-top: 4px solid #a8a8a8; border-bottom: 0; }
.combo input, .combo select { width: 100%; padding-left: 2px; }
.c-font { width: 97px; } .c-size { width: 43px; } .c-num { width: 129px; }
.box { display: flex; align-items: center; justify-content: space-around; border: 1px solid #94b2d6; border-radius: 2px; background: linear-gradient(#d5e2f3, #c2d4ea 45%, #b9cde7 50%, #cbdcf0); }
.hot { justify-content: flex-start; gap: 1px; background: linear-gradient(#fbdcab, #fdc268 40%, #fca93f 45%, #fde98d); border-color: #9a9a8c; }
.hot svg + svg { box-shadow: -1px 0 0 #d5b06a; }
.b-grow { width: 44px; margin-left: 4px; } .b-biu { width: 80px; } .b-bord { width: 35px; margin-left: 3px; } .b-fill { width: 67px; margin-left: 3px; }
.b-three { width: 70px; } .b-orient { width: 32px; margin-left: 2px; } .b-indent { width: 46px; margin-left: 2px; justify-content: flex-start; } .b-pct { width: 80px; color: #6b7890; } .b-dec { width: 46px; margin-left: 3px; }
.serif { font-family: "Liberation Serif", serif; font-weight: 700; font-size: 14px; color: #5c6f92; }
.serif.large { font-size: 17px; }
.serif sup { font-size: 8px; }
.it { font-style: italic; }
.un { text-decoration: underline; }
.wrap-btn { width: 109px; gap: 3px; justify-content: flex-start; padding-left: 2px; margin-right: 117px; color: #8d8373; border: 1px solid #b09263; border-radius: 2px; background: linear-gradient(#f6c68c, #fbb65a 45%, #fba736 50%, #fde593); }
.merge-btn { width: 226px; padding-left: 3px; gap: 4px; justify-content: flex-start; color: #8d8d8d; }
.ico-a { font: bold 13px "Liberation Serif", serif; fill: #7486a6; }
.ico-ab { font: bold 11px "Liberation Serif", serif; fill: #7d8ca6; }
.ico-s { font: bold 9px "Liberation Serif", serif; fill: #5f7396; }
.ico-d { font: bold 9px "Liberation Sans", sans-serif; fill: #333; }
.ico-sort { font: bold 15px "Liberation Serif", serif; fill: #8997b0; }
.ico-w { font: italic bold 12px "Liberation Serif", serif; fill: #2a4f98; }
.g-style .body { padding: 0 4px; justify-content: space-between; }
.list { display: flex; flex-direction: column; padding: 1px 0 0 6px; }
.group .list { flex-direction: column; }
.list button { height: 22px; gap: 4px; justify-content: flex-start; }
.g-edit .list { width: 36px; }
.g-edit .list button { gap: 8px; }
.g-edit .big { width: 66px; }
.g-edit .find { width: 68px; }

/* formula bar */
.fbar { flex: none; height: 22px; margin-top: 3px; display: flex; align-items: center; border: 1px solid #6f93c0; border-left: 0; background: #fff; font-size: 13px; color: #000; }
.name-box { width: 144px; text-align: center; }
.fx { width: 84px; height: 20px; margin-left: 7px; margin-right: 8px; display: flex; align-items: center; justify-content: space-between; padding: 0 6px; border-right: 1px solid #6f93c0; border-radius: 10px 0 0 10px; background: linear-gradient(#e9f0fb, #a9bfe0 45%, #c9d9f0); box-shadow: -1px 0 0 #7f9cc4; }
.knob { width: 8px; height: 8px; border-radius: 4px; background: #9aaccb; }
.fx-label { font: italic bold 15px "Liberation Serif", serif; color: #3c4450; }
.fx-label sub { font-size: 10px; }
.formula { flex: 1; }
.expand { width: 15px; height: 20px; border-left: 1px solid #6f93c0; background: linear-gradient(#dfeaf8, #a9c4ec); }

/* worksheet */
.work { flex: 1; min-height: 0; display: flex; margin-top: 3px; border-top: 1px solid #6f93c0; background: #aac6ee; }
.sheet { flex: 1; min-width: 0; position: relative; overflow: hidden; background: #fff; }
.grid { width: 100%; table-layout: fixed; border-collapse: separate; border-spacing: 0; color: #000; font-family: "Liberation Serif", serif; font-size: 17px; }
.grid th, .grid td { padding: 0; height: 18px; line-height: 17px; overflow: hidden; white-space: nowrap; border-right: 1px solid #d0d7e5; border-bottom: 1px solid #d0d7e5; text-align: center; }
.grid th { font-family: "Open Sans", "Noto Sans", sans-serif; font-weight: 400; font-size: 12px; color: #2c4451; border-color: #9eb6ce; background: #e4ecf7; vertical-align: bottom; }
.grid thead th { height: 17px; line-height: 15px; background: linear-gradient(#f9fcfd, #d3dbe9); }
.grid thead .corner { background: #a9c4e9; }
.corner svg { margin: 0 4px 3px auto; }
.grid .b { padding-top: 2px; border-right: 2px solid #000; border-bottom: 2px solid #000; }
.grid .bb { border-bottom: 2px solid #000; }
.grid .n { font-weight: 700; }
.grid .s { font-size: 14px; }
.grid .w { padding: 0; font-size: 15px; line-height: 20px; vertical-align: top; }
.w div { height: 38px; padding-top: 1px; }
.grid .eq { padding: 0; }
.grid .fact { font: 12px "Liberation Sans", sans-serif; }
.grid .out { font: bold 12px "Open Sans", "Noto Sans", sans-serif; line-height: 16px; text-align: left; padding-left: 2px; }
.grid .note { font-family: "Open Sans", "Noto Sans", sans-serif; font-size: 12px; vertical-align: top; }
.grid .n1 { line-height: 20px; padding-top: 3px; }
.grid .n2 { line-height: 19px; padding-top: 1px; }
.note sup, .note sub { font-size: 8px; line-height: 0; }
.w26 { width: 26px; } .w38 { width: 38px; } .w57 { width: 57px; } .w66 { width: 66px; } .w74 { width: 74px; } .w82 { width: 82px; } .w83 { width: 83px; } .w85 { width: 85px; } .w86 { width: 86px; } .w100 { width: 100px; } .w102 { width: 102px; } .w114 { width: 114px; }
.h19 > * { height: 19px !important; } .h23 > * { height: 23px !important; } .h27 > * { height: 27px !important; } .h34 > * { height: 34px !important; } .h40 > * { height: 40px !important; } .h43 > * { height: 43px !important; } .h46 > * { height: 46px !important; }
.h23 > .note { height: 69px !important; }
.m10 { font: italic 10px "Liberation Serif", serif; } .m12 { font: italic 12px "Liberation Serif", serif; } .m16 { font: italic 16px "Liberation Serif", serif; }
.r12 { font: 12px "Liberation Serif", serif; } .r16 { font: 16px "Liberation Serif", serif; } .r18 { font: 18px "Liberation Serif", serif; }
.upor { font: 12px "Liberation Sans", sans-serif; }
.ranges { position: absolute; left: 97px; top: 217px; }
.chart { position: absolute; left: 651px; top: 96px; }
.chart text { font-family: "Open Sans", "Noto Sans", sans-serif; fill: #000; }
.ch-title { font-size: 17px; font-weight: 700; }
.ch-tick, .ch-cat { font-size: 11px; }
.ch-axis { font-size: 10px; font-weight: 700; }

.vscroll { width: 16px; margin-right: 4px; display: flex; flex-direction: column; align-items: center; background: linear-gradient(90deg, #9ab5dc, #7394c1 30%, #7f9dc8); }
.vsplit { width: 14px; height: 7px; border: 1px solid #6f93c0; background: linear-gradient(#6f93c0, #6f93c0) center / 8px 1px no-repeat #fff; }
.tri { width: 0; height: 0; border: 4px solid transparent; flex: none; }
.tri.up { border-top: 0; border-bottom-color: #46537a; margin-top: 7px; }
.tri.down { border-bottom: 0; border-top-color: #46537a; margin: auto 0 7px; }
.tri.left { border-left: 0; border-right: 5px solid #46537a; margin: 0 7px 0 6px; }
.tri.right { border-right: 0; border-left: 5px solid #46537a; margin: 0 7px 0 auto; }
.vthumb { width: 14px; height: 218px; margin-top: 258px; display: flex; align-items: center; justify-content: center; border: 1px solid #56688f; border-radius: 1px; background: linear-gradient(90deg, #f0f2f5, #dfe4ea 45%, #b7c6d8 60%, #d2deeb); }
.vthumb i { width: 8px; height: 8px; background: repeating-linear-gradient(#70809a 0 1px, transparent 1px 2px); }

/* sheet tabs */
.sheets { flex: none; height: 17px; display: flex; border-top: 1px solid #7d96bd; border-bottom: 1px solid #6484b8; background: #9bb6dd; color: #1e4391; font-size: 12px; }
.sheet-nav { width: 63px; padding-left: 5px; display: flex; align-items: center; background: #d5e4f9; border-right: 1px solid #8ea8cf; }
.stab, .slant { height: 15px; background: linear-gradient(#e1ecfc, #b9d2f6 50%, #d9e7fb); }
.s1 { width: 129px; padding-left: 5px; } .s2 { width: 130px; padding-right: 4px; border-right: 1px solid #7d96bd; } .s3 { width: 133px; padding-left: 4px; background: #fff; font-weight: 700; color: #15358a; } .s4 { width: 156px; } .s5 { width: 20px; }
.hscroll { flex: 1; margin-left: 122px; margin-right: 20px; display: flex; align-items: center; background: #7896c4; }
.hsplit { width: 7px; height: 13px; flex: none; border: 1px solid #6f93c0; background: linear-gradient(#6f93c0, #6f93c0) center / 1px 7px no-repeat #fff; }
.hthumb { flex: 0 1 433px; height: 14px; display: flex; align-items: center; justify-content: center; border: 1px solid #56688f; background: linear-gradient(#eef1f4, #dde2e8 45%, #b5c4d6 55%, #d5e0ec); }
.hthumb i { width: 8px; height: 7px; background: repeating-linear-gradient(90deg, #70809a 0 1px, transparent 1px 2px); }

/* status bar */
.status { flex: none; height: 22px; display: flex; align-items: center; border-bottom: 1px solid #41526b; background: linear-gradient(#e2edfb, #cfe1fa 30%, #aecbf3 36%, #cfe1fa 80%, #b6cdf0); color: #15254f; white-space: nowrap; }
.ready { width: 53px; padding-left: 7px; height: 20px; line-height: 20px; border-right: 1px solid #92b0dc; }
.stat { margin-left: auto; width: 130px; }
.st2, .st3 { margin-left: 0; }
.st2 { width: 96px; }
.st3 { width: 64px; }
.zoom { width: 240px; height: 21px; display: flex; align-items: center; padding-left: 6px; border-left: 1px solid #6f8fc4; background: linear-gradient(#a9c8f3, #7fa5dc 48%, #8fb3e6); }
.views { display: flex; width: 56px; height: 17px; border: 1px solid #7d9bcb; background: #c4d8f3; }
.views button { width: 18px; }
.views .on { background: linear-gradient(#f7d9a0, #fbcf5c); }
.pct { width: 38px; padding-left: 8px; }
.zoom input { width: 101px; height: 16px; margin: 0 1px; background: linear-gradient(#54719f, #54719f) center / 100% 1px no-repeat; }
.zoom input::-webkit-slider-thumb { appearance: none; width: 9px; height: 12px; border: 1px solid #4b6084; border-radius: 0 0 5px 5px; background: #e5edf9; }

/* taskbar */
.taskbar { flex: none; height: 39px; display: flex; align-items: stretch; padding-left: 8px; gap: 1px; background: linear-gradient(90deg, #8499b0, #8fa7bf 55px, #b0cbe6 85px, #b3cfea 55%, #a6c3df 66%, #b6d2ec 72%, #b0cce6 82%, #8a9fb7 87%, #7d92aa); }
.task { width: 61px; }
.task.start { width: 38px; margin-right: 12px; }
.framed { width: 60px; margin-right: 1px; border: 1px solid #5b6d80; border-radius: 3px; background: linear-gradient(135deg, #dfeaf5, #a9c3db 60%, #bdd3e8); box-shadow: inset 0 0 0 1px #eaf3fb; }
.current { background: linear-gradient(#f1f6fb, #cfdfee); }
.fold { width: 58px; margin-right: 4px; }
.tray { margin-left: auto; display: flex; align-items: center; gap: 9px; color: #fff; }
.tray .more { margin-right: 3px; }
.clock { margin-left: 5px; width: 62px; line-height: 17px; text-align: center; }
.desk { width: 14px; height: 38px; border: 1px solid #5f7389; background: linear-gradient(#b5c6d6, #7e93a9); }
```
